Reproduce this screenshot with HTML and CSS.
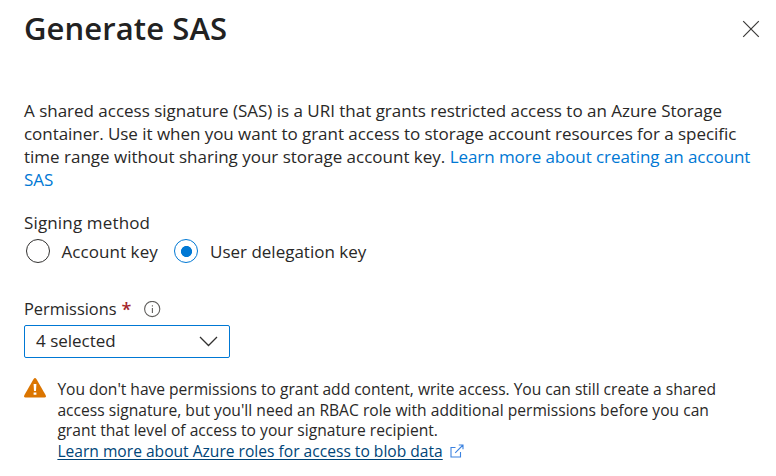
FILE: index.html
```
<!DOCTYPE html>
<html lang="en">
<head>
<meta charset="utf-8">
<title>Generate SAS</title>
<link rel="stylesheet" href="styles.css">
</head>
<body>
<main class="panel">
  <header class="header">
    <h1 class="title">Generate SAS</h1>
    <button class="close" aria-label="Close">
      <svg width="18" height="18" viewBox="0 0 18 18"><path d="M1.2 1.2 16.8 16.8M16.8 1.2 1.2 16.8"/></svg>
    </button>
  </header>

  <p class="intro">
    <span class="line line-1">A shared access signature (SAS) is a URI that grants restricted access to an Azure Storage</span>
    <span class="line line-2">container. Use it when you want to grant access to storage account resources for a specific</span>
    <span class="line line-3">time range without sharing your storage account key. <a class="link link-learn">Learn more about creating an account</a></span>
    <span class="line"><a class="link">SAS</a></span>
  </p>

  <section class="signing">
    <div class="signing-label">Signing method</div>
    <div class="radios">
      <label class="option option-key"><span class="radio"></span>Account key</label>
      <label class="option option-user"><span class="radio checked"></span>User delegation key</label>
    </div>
  </section>

  <section class="permissions">
    <div class="field-label">
      <span>Permissions</span>
      <span class="required">*</span>
      <svg class="info" width="17" height="17" viewBox="0 0 17 17"><circle cx="8.2" cy="8" r="7.6"/><path d="M8.4 7v5"/><path d="M8.4 4.2v1.3"/></svg>
    </div>
    <div class="select">
      <span class="value">4 selected</span>
      <svg width="19" height="11" viewBox="0 0 19 11"><path d="M1 1 9.5 9.5 18 1"/></svg>
    </div>
  </section>

  <section class="warning">
    <svg class="warning-icon" width="22" height="20" viewBox="0 0 22 20"><path class="triangle" d="M9.6.9Q11-.8 12.4.9L21.7 17.2Q22.4 19.3 20.5 19.5H1.5Q-.4 19.3.3 17.2Z"/><path class="mark" d="M9.6 6h2.8l-.4 7h-2zM9.6 14.4h2.8v2.3H9.6z"/></svg>
    <div class="message">
      <span class="line warn-1">You don't have permissions to grant add content, write access. You can still create a shared</span>
      <span class="line warn-2">access signature, but you'll need an RBAC role with additional permissions before you can</span>
      <span class="line warn-3">grant that level of access to your signature recipient.</span>
      <span class="line"><a class="roles">Learn more about Azure roles for access to blob data</a><svg class="external" width="14" height="14" viewBox="0 0 14 14"><path d="M5.5 3.5H1v9.5h9.5V8M5.2 8.8 13 1M8.8 1H13v4.2"/></svg></span>
    </div>
  </section>
</main>
</body>
</html>
```
FILE: styles.css
```
* { box-sizing: border-box; }
body {
  margin: 0;
  background: #fff;
  color: #292827;
  font: 17px/23px "Open Sans", "Noto Sans", sans-serif;
}
.panel { padding: 8px 16px 0 24px; }
.header { display: flex; justify-content: space-between; height: 40px; }
.title { margin: 0; font-size: 31px; line-height: 40px; font-weight: 600; letter-spacing: 0.1px; color: #222; }
.close { width: 18px; height: 18px; margin-top: 12px; padding: 0; border: 0; background: none; }
svg { display: block; fill: none; flex: none; }
.close svg { stroke: #3b3a39; stroke-width: 1.2; }

.intro { margin: 51px 0 0; }
.line { display: block; white-space: nowrap; }
.line-1 { letter-spacing: -0.012px; }
.line-2 { letter-spacing: -0.04px; }
.line-3 { letter-spacing: -0.008px; }
.link { color: #0078d4; }
.link-learn { letter-spacing: -0.07px; }

.signing { margin-top: 20px; }
.signing-label { letter-spacing: 0.15px; }
.radios { display: flex; gap: 16px; margin-top: 5px; padding-left: 2px; }
.option { display: flex; align-items: center; gap: 12px; height: 24px; white-space: nowrap; }
.option-key { gap: 11.4px; width: 132px; letter-spacing: 0.08px; }
.radio { width: 24px; height: 24px; border: 1px solid #323130; border-radius: 50%; flex: none; }
.checked { border-color: #0078d4; background: radial-gradient(circle at 11.5px 11.5px, #0078d4 5.2px, transparent 5.9px); }

.permissions { margin-top: 35px; }
.field-label { display: flex; align-items: center; height: 22px; font-size: 16.4px; line-height: 22px; }
.required { margin-left: 5px; color: #a4262c; font-size: 18px; font-weight: 600; }
.info { margin-left: 13px; stroke: #605e5c; stroke-width: 1.1; }
.select {
  display: flex;
  align-items: center;
  justify-content: space-between;
  width: 206px;
  height: 33px;
  margin-top: 5px;
  padding: 0 11px 0 11px;
  border: 1px solid #0078d4;
  border-radius: 2px;
}
.value { padding-bottom: 2px; }
.select svg { stroke: #323130; stroke-width: 1.3; }

.warning { display: flex; gap: 11px; margin-top: 20px; font-size: 15.6px; line-height: 20.7px; }
.triangle { fill: #db7500; }
.mark { fill: #fff; }
.message { padding: 0.8px 0 0 0.4px; }
.warn-1 { letter-spacing: -0.025px; }
.warn-2 { letter-spacing: 0.015px; }
.warn-3 { letter-spacing: 0.015px; }
.roles { color: #004578; text-decoration: underline; text-decoration-thickness: 1px; text-underline-offset: 2px; }
.external { display: inline-block; margin-left: 7px; vertical-align: -1px; stroke: #3b82e0; stroke-width: 1.1; }
```
